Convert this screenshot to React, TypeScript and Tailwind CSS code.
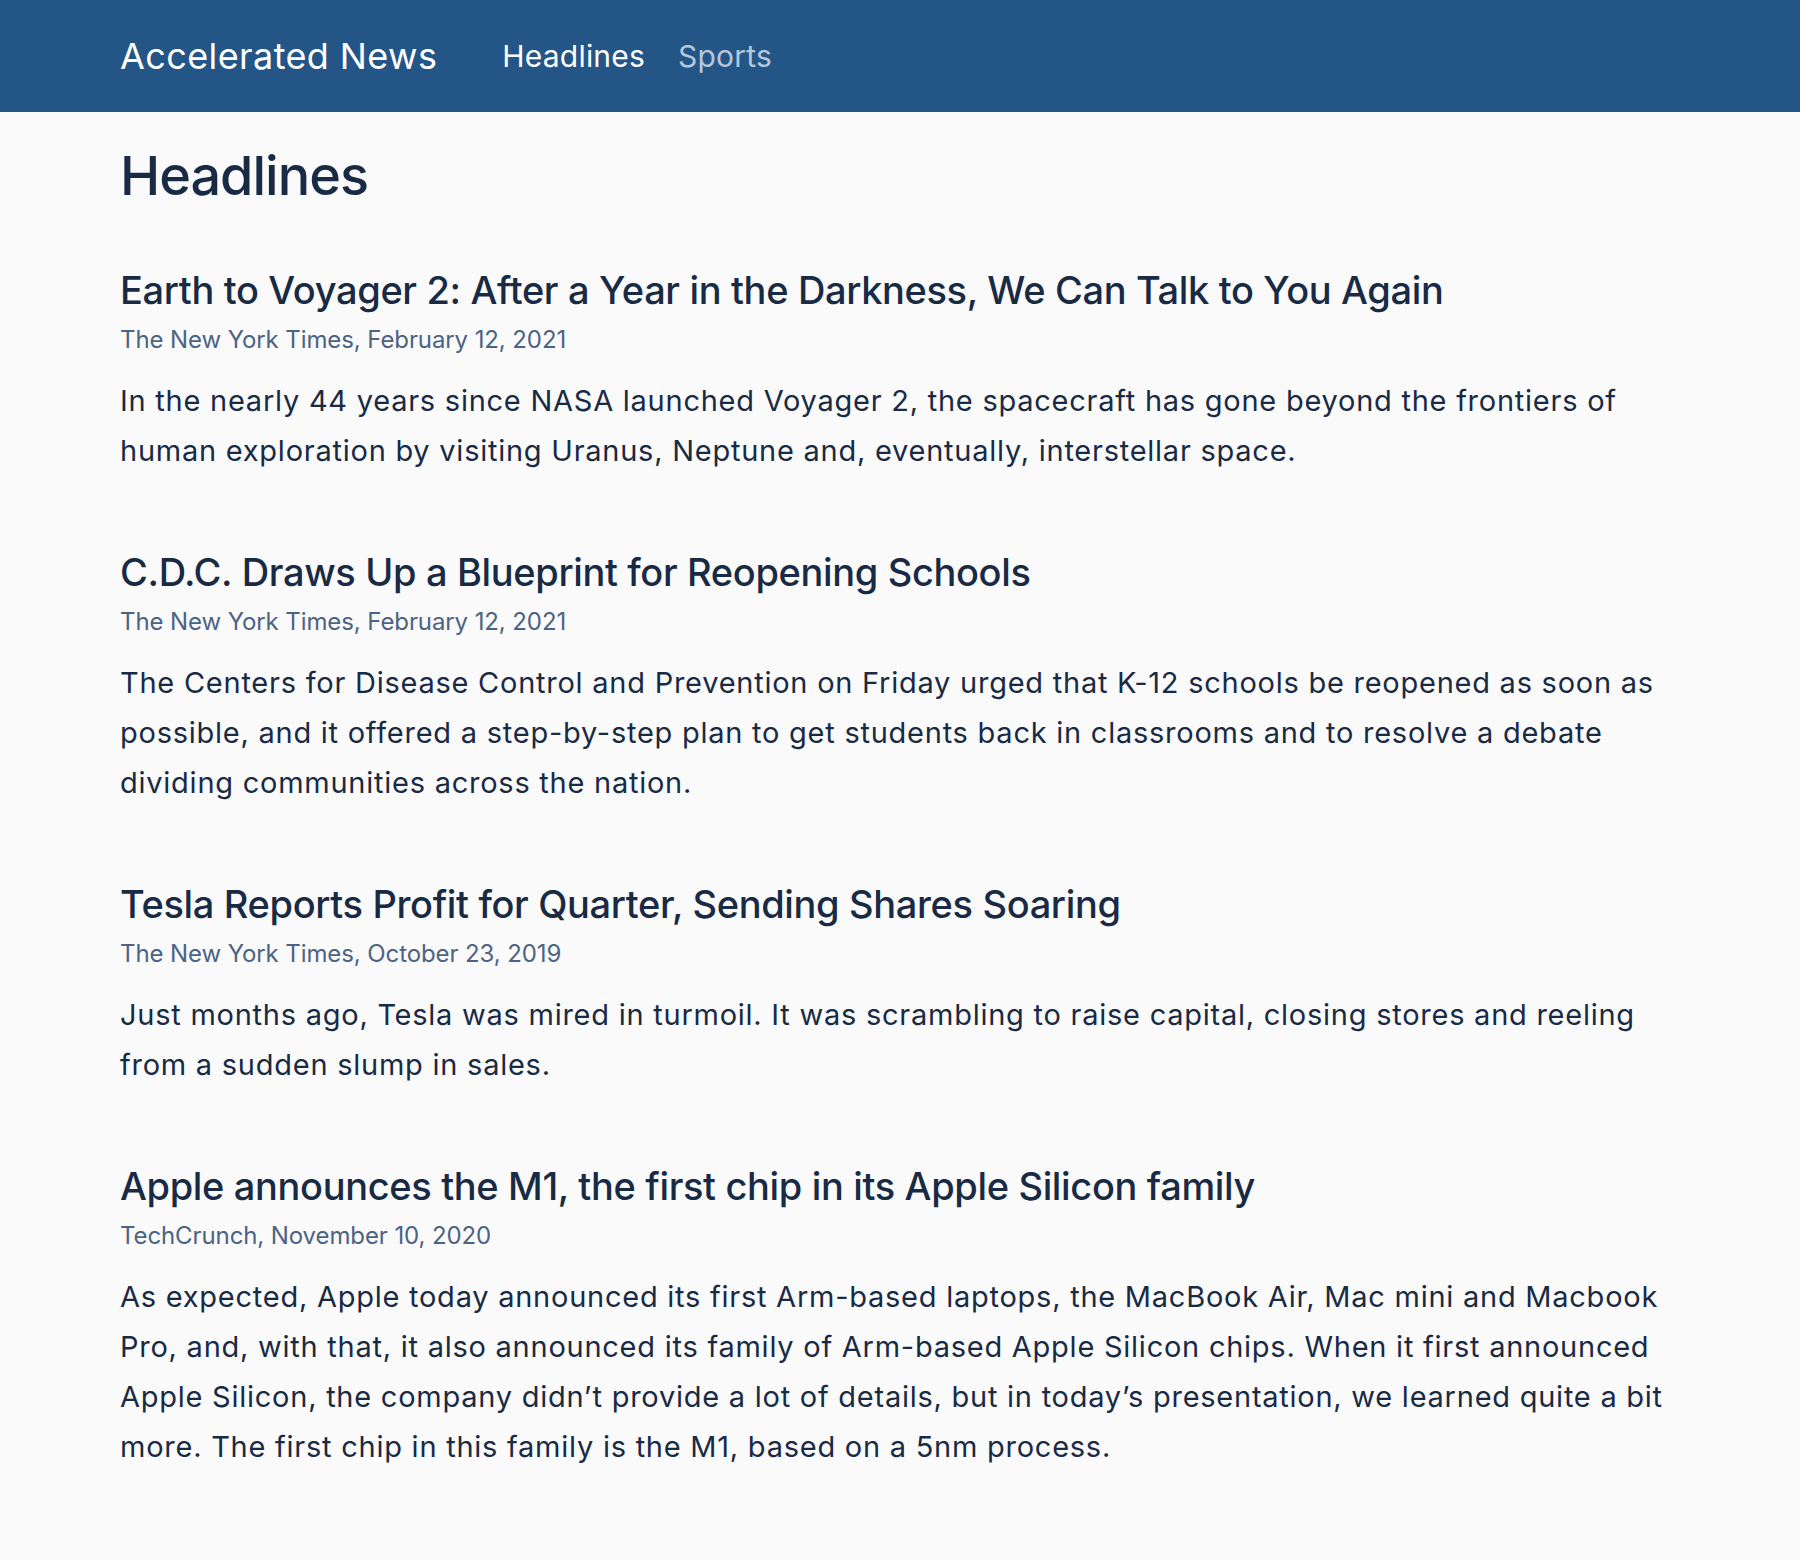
import React from "react";

const articles = [
  {
    title: "Earth to Voyager 2: After a Year in the Darkness, We Can Talk to You Again",
    meta: "The New York Times, February 12, 2021",
    body: "In the nearly 44 years since NASA launched Voyager 2, the spacecraft has gone beyond the frontiers of human exploration by visiting Uranus, Neptune and, eventually, interstellar space.",
  },
  {
    title: "C.D.C. Draws Up a Blueprint for Reopening Schools",
    meta: "The New York Times, February 12, 2021",
    body: "The Centers for Disease Control and Prevention on Friday urged that K-12 schools be reopened as soon as possible, and it offered a step-by-step plan to get students back in classrooms and to resolve a debate dividing communities across the nation.",
  },
  {
    title: "Tesla Reports Profit for Quarter, Sending Shares Soaring",
    meta: "The New York Times, October 23, 2019",
    body: "Just months ago, Tesla was mired in turmoil. It was scrambling to raise capital, closing stores and reeling from a sudden slump in sales.",
  },
  {
    title: "Apple announces the M1, the first chip in its Apple Silicon family",
    meta: "TechCrunch, November 10, 2020",
    body: "As expected, Apple today announced its first Arm-based laptops, the MacBook Air, Mac mini and Macbook Pro, and, with that, it also announced its family of Arm-based Apple Silicon chips. When it first announced Apple Silicon, the company didn\u2019t provide a lot of details, but in today\u2019s presentation, we learned quite a bit more. The first chip in this family is the M1, based on a 5nm process.",
  },
];

export default function App() {
  return (
    <div className="min-h-[1560px] bg-[#fafafa] font-['Inter',sans-serif] text-[#192a45]">
      <header className="h-[112px] bg-[#245587] px-[120px] flex items-center">
        <div className="text-[36px] leading-[44px] tracking-[0.4px] text-white">Accelerated News</div>
        <nav className="ml-[65px] flex gap-[33px] text-[30px] leading-[40px] tracking-[0.2px]">
          <span className="text-white">Headlines</span>
          <span className="text-[#b6c7dc]">Sports</span>
        </nav>
      </header>
      <main className="px-[120px] pt-[32px]">
        <h1 className="text-[54px] leading-[64px] font-medium tracking-[-1px] mb-[58px]">Headlines</h1>
        <div className="flex flex-col gap-[72px]">
          {articles.map((a) => (
            <article key={a.title}>
              <h2 className="text-[38px] leading-[48px] font-medium tracking-[-0.35px]">{a.title}</h2>
              <div className="mt-[10px] text-[24px] leading-[32px] tracking-[-0.1px] text-[#4c6383]">{a.meta}</div>
              <p className="mt-[20px] text-[29px] leading-[50px] tracking-[0.75px]">{a.body}</p>
            </article>
          ))}
        </div>
      </main>
    </div>
  );
}
